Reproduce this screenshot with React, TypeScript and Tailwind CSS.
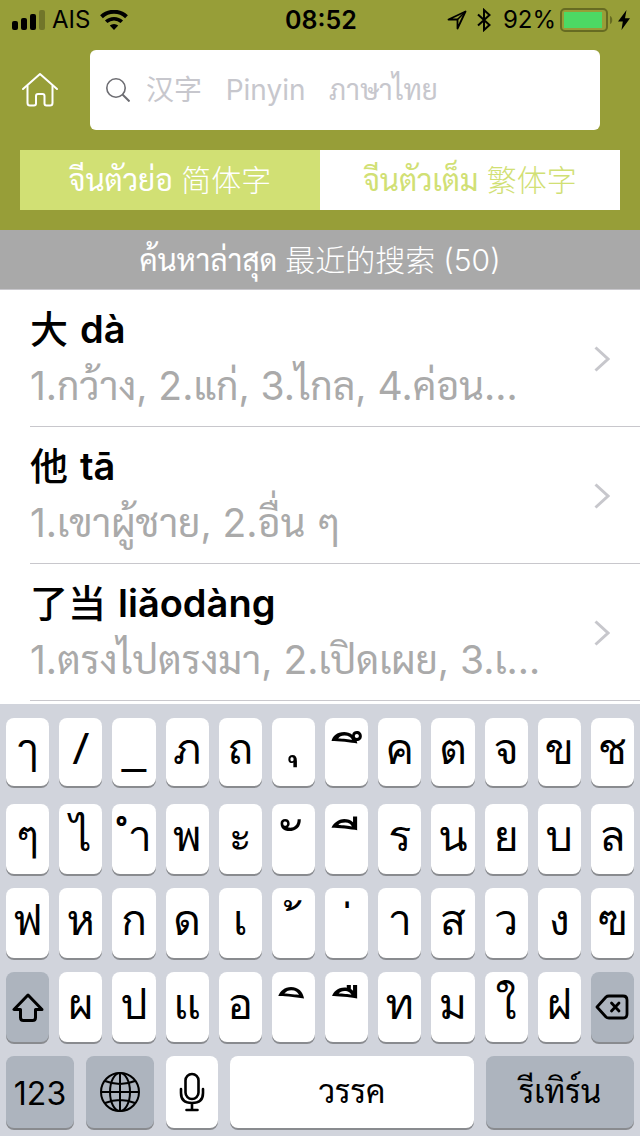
import clsx from "clsx";
import type { ReactNode } from "react";

const entries = [
  { word: "大", pinyin: "dà", meaning: "1.กว้าง, 2.แก่, 3.ไกล, 4.ค่อน…" },
  { word: "他", pinyin: "tā", meaning: "1.เขาผู้ชาย, 2.อื่น ๆ" },
  { word: "了当", pinyin: "liǎodàng", meaning: "1.ตรงไปตรงมา, 2.เปิดเผย, 3.เ…" },
];

type Letter = string | { mark: string; kind: "vowel" | "tone" | "below" | "am" };

// combining vowels and tone marks sit on no-break spaces so they show without a dotted circle
const firstRow: Letter[] = ["ๅ", "/", "_", "ภ", "ถ", { mark: "\u00a0ุ", kind: "below" }, { mark: "\u00a0\u00a0ึ", kind: "vowel" }, "ค", "ต", "จ", "ข", "ช"];
const secondRow: Letter[] = ["ๆ", "ไ", { mark: "ำ", kind: "am" }, "พ", "ะ", { mark: "\u00a0ั", kind: "vowel" }, { mark: "\u00a0\u00a0ี", kind: "vowel" }, "ร", "น", "ย", "บ", "ล"];
const thirdRow: Letter[] = ["ฟ", "ห", "ก", "ด", "เ", { mark: "\u00a0้", kind: "tone" }, { mark: "\u00a0่", kind: "tone" }, "า", "ส", "ว", "ง", "ฃ"];
const fourthRow: Letter[] = ["ผ", "ป", "แ", "อ", { mark: "\u00a0\u00a0ิ", kind: "vowel" }, { mark: "\u00a0\u00a0ื", kind: "vowel" }, "ท", "ม", "ใ", "ฝ"];

const markStyles = {
  vowel: "pt-3 text-[56px]",
  tone: "pt-[22px] text-[48px]",
  below: "pb-9 text-[56px]",
  am: "pb-[6px] pl-3 text-[43px]",
};

function StatusBar() {
  return (
    <div className="grid h-10 grid-cols-[1fr_auto_1fr] items-center pr-[10px] pl-3 text-[24px] leading-none text-black">
      <div className="flex items-center gap-[6px]">
        <svg width="34" height="20" viewBox="0 0 34 20" aria-hidden="true">
          <rect x="0" y="11" width="6" height="9" rx="2" />
          <rect x="9" y="8" width="6" height="12" rx="2" />
          <rect x="18" y="4" width="6" height="16" rx="2" />
          <rect x="27" y="0" width="6" height="20" rx="2" opacity="0.25" />
        </svg>
        <span>AIS</span>
        <svg width="28" height="20" viewBox="0 0 28 20" className="ml-1" aria-hidden="true">
          <path d="M1.500 6.800a18 18 0 0 1 25 0" fill="none" stroke="black" strokeWidth="4" />
          <path d="M6.200 11.800a11.300 11.300 0 0 1 15.600 0" fill="none" stroke="black" strokeWidth="3.600" />
          <path d="M9.800 15.600a6.200 6.200 0 0 1 8.400 0L14 20Z" />
        </svg>
      </div>
      <div className="text-[25px] font-semibold">08:52</div>
      <div className="flex items-center justify-end">
        <svg width="20" height="20" viewBox="0 0 20 20" className="mr-[10px]" aria-hidden="true">
          <path d="M1.500 9.500 18.500 1.500 10.500 18.500V9.500Z" fill="none" stroke="black" strokeWidth="1.800" strokeLinejoin="round" />
          <path d="m10.500 9.500 8-8" stroke="black" strokeWidth="1.600" />
        </svg>
        <svg width="14" height="24" viewBox="0 0 14 24" className="mr-3" aria-hidden="true">
          <path d="M1 6.500 12.500 17 7 22V2l5.500 5L1 17.500" fill="none" stroke="black" strokeWidth="2" />
        </svg>
        <span className="mr-1">92%</span>
        <svg width="54" height="24" viewBox="0 0 54 24" className="mr-1" aria-hidden="true">
          <rect x="1" y="1" width="46" height="22" rx="4" fill="none" stroke="#666b22" strokeWidth="2" />
          <rect x="4" y="4" width="38" height="16" fill="#4cd964" />
          <path d="M50 8v8c3-1 3-7 0-8Z" fill="#666b22" />
        </svg>
        <svg width="12" height="20" viewBox="0 0 12 20" aria-hidden="true">
          <path d="M8.500 0 0 11.500h4.800L3.500 20 12 8.200H7Z" />
        </svg>
      </div>
    </div>
  );
}

function SearchHeader() {
  return (
    <header className="bg-[#979e38]">
      <StatusBar />
      <div className="flex items-center pt-[10px] pr-10 pl-5">
        <a href="#home" aria-label="Home" className="mr-[30px]">
          <svg width="40" height="40" viewBox="0 0 40 40" fill="none" stroke="white" strokeWidth="2" strokeLinejoin="round" strokeLinecap="round" aria-hidden="true">
            <path d="M3 19 20 4l17 15" />
            <path d="M7.500 16v17q0 2.500 2.500 2.500h4q2 0 2-2V26q0-2 2-2h4.500q2 0 2 2v7.500q0 2 2 2H30q2.500 0 2.500-2.500V16" />
          </svg>
        </a>
        <label className="flex h-20 flex-1 items-center rounded-md bg-white pl-4">
          <svg width="24" height="24" viewBox="0 0 24 24" fill="none" stroke="#6d6d72" strokeWidth="1.600" aria-hidden="true">
            <circle cx="10" cy="10" r="9.200" />
            <path d="m16.500 16.500 7 7" strokeWidth="2" />
          </svg>
          <input type="search" aria-label="Search" placeholder={"汉字   Pinyin   ภาษาไทย"} className="ml-4 h-full min-w-0 flex-1 text-[28px] outline-none placeholder:text-[#c7c7cd]" />
        </label>
      </div>
      <div className="grid grid-cols-2 p-5 text-[30px] leading-none">
        <button type="button" aria-pressed="true" className="h-[60px] bg-[#d1e074] text-white">
          จีนตัวย่อ <span className="font-light">简体字</span>
        </button>
        <button type="button" aria-pressed="false" className="h-[60px] bg-white text-[#d1e074]">
          จีนตัวเต็ม <span className="font-light">繁体字</span>
        </button>
      </div>
    </header>
  );
}

function Key({ children, dark, label, className }: { children: ReactNode; dark?: boolean; label?: string; className?: string }) {
  return (
    <button
      type="button"
      aria-label={label}
      className={clsx("flex items-center justify-center rounded-lg leading-none text-black shadow-[0_2px_0_#898b8f]", dark ? "bg-[#adb4be]" : "bg-white", className)}
    >
      {children}
    </button>
  );
}

function LetterKeys({ letters }: { letters: Letter[] }) {
  return letters.map((letter, i) => (
    <Key key={i} className={clsx("h-full min-w-0 font-['Loma','Sarabun',sans-serif]", typeof letter === "string" ? "pb-[6px] text-[43px]" : markStyles[letter.kind])}>
      {typeof letter === "string" ? letter : letter.mark}
    </Key>
  ));
}

function Keyboard() {
  return (
    <div className="bg-[#d1d4dc] px-[6px] pt-[14px] pb-2">
      <div className="mb-[18px] grid auto-rows-[68px] grid-cols-12 gap-x-[10px]">
        <LetterKeys letters={firstRow} />
      </div>
      <div className="grid auto-rows-[70px] grid-cols-12 gap-x-[10px] gap-y-[14px]">
        <LetterKeys letters={secondRow} />
        <LetterKeys letters={thirdRow} />
        <Key dark label="Shift" className="h-full">
          <svg width="32" height="30" viewBox="0 0 32 30" fill="none" stroke="black" strokeWidth="3" strokeLinejoin="round" aria-hidden="true">
            <path d="M16 3 2 17.500h6.500v8q0 3 3 3h9q3 0 3-3v-8H30Z" />
          </svg>
        </Key>
        <LetterKeys letters={fourthRow} />
        <Key dark label="Delete" className="h-full">
          <svg width="34" height="26" viewBox="0 0 34 26" fill="none" stroke="black" strokeWidth="2.800" strokeLinejoin="round" strokeLinecap="round" aria-hidden="true">
            <path d="M2 13 11 3q1-1 3-1h14q4 0 4 4v14q0 4-4 4H14q-2 0-3-1Z" />
            <path d="m16.500 9 7.500 8m0-8-7.500 8" />
          </svg>
        </Key>
      </div>
      <div className="mt-[14px] flex h-[72px] gap-3">
        <Key dark className="w-[68px] pt-1 text-[32px]">
          123
        </Key>
        <Key dark label="Next keyboard" className="w-[68px]">
          <svg width="40" height="40" viewBox="0 0 40 40" fill="none" stroke="black" strokeWidth="2" aria-hidden="true">
            <circle cx="20" cy="20" r="19" />
            <ellipse cx="20" cy="20" rx="10" ry="19" />
            <path d="M20 1v38M1 20h38M5 9q15 6 30 0M5 31q15-6 30 0" />
          </svg>
        </Key>
        <Key label="Dictation" className="w-[52px]">
          <svg width="26" height="40" viewBox="0 0 26 40" fill="none" stroke="black" strokeWidth="2.600" strokeLinecap="round" aria-hidden="true">
            <rect x="6.500" y="2" width="13" height="25" rx="6.500" />
            <path d="M2 17v4q0 10 11 10t11-10v-4M13 31v7M7.500 38h11" />
          </svg>
        </Key>
        <Key className="flex-1 text-[32px]">วรรค</Key>
        <Key dark className="w-[148px] text-[32px]">
          รีเทิร์น
        </Key>
      </div>
    </div>
  );
}

export default function App() {
  return (
    <div className="bg-white font-['Inter','Sarabun','Noto_Sans_Thai_Looped','Noto_Sans_CJK_SC',sans-serif]">
      <SearchHeader />
      <main className="pb-[3px]">
        <h1 className="flex h-[60px] items-center justify-center gap-2 border-b border-[#c8c7cc] bg-[#a9a9a9] text-[30px] leading-none font-light text-white">
          <span className="font-normal">ค้นหาล่าสุด</span>
          <span>最近的搜索</span>
          <span>(50)</span>
        </h1>
        <ul className="pl-[30px]">
          {entries.map((entry) => (
            <li key={entry.word} className="border-b border-[#c8c7cc]">
              <a href="#entry" className="flex h-[136px] items-center justify-between pt-[2px] pr-[30px]">
                <div className="whitespace-nowrap">
                  <div className="flex h-[54px] items-baseline gap-3 text-[38px] leading-[54px] text-black">
                    <span className="font-medium">{entry.word}</span>
                    <span className="font-semibold">{entry.pinyin}</span>
                  </div>
                  <div className="h-[60px] text-[39px] leading-[60px] text-[#aaaaaa]">{entry.meaning}</div>
                </div>
                <svg width="16" height="26" viewBox="0 0 16 26" fill="none" stroke="#c7c7cc" strokeWidth="3" aria-hidden="true">
                  <path d="m1.500 1.500 12.500 11.500-12.500 11.500" />
                </svg>
              </a>
            </li>
          ))}
        </ul>
      </main>
      <Keyboard />
    </div>
  );
}
